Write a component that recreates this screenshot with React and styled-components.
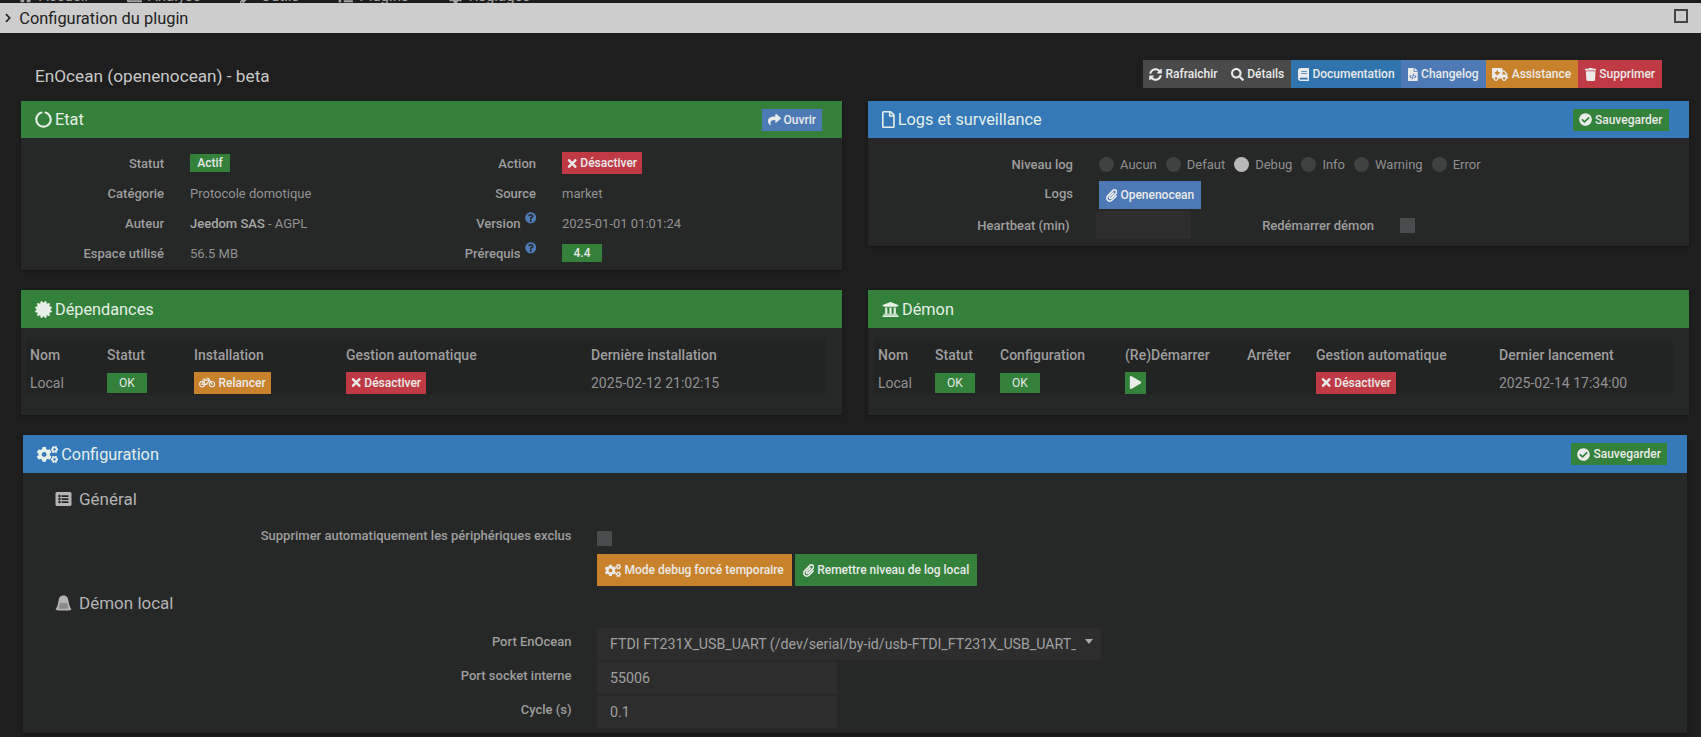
import styled, { createGlobalStyle } from "styled-components";
import {
  FaAmbulance, FaBicycle, FaBook, FaCertificate, FaCheckCircle, FaChevronRight, FaCircleNotch, FaCogs,
  FaFileCode, FaListAlt, FaPaperclip, FaPlay, FaQuestionCircle, FaRegFile, FaSearch, FaShare, FaSyncAlt,
  FaTimes, FaTrash, FaUniversity, FaHome, FaChartBar, FaWrench, FaTasks, FaCog,
} from "react-icons/fa";

const GlobalStyle = createGlobalStyle`
  html, body { margin: 0; padding: 0; background: #1e1e1e; }
  body { font-family: Roboto, "Liberation Sans", sans-serif; font-size: 13px; color: #9c9c9c; overflow: hidden; }
  * { box-sizing: border-box; }
`;

const colors = {
  green: "#33813b",
  blue: "#3579b8",
  orange: "#c8822c",
  red: "#c03a46",
  steel: "#4d7ab5",
  gray: "#4a4a4a",
  doc: "#3174ad",
};

// react-icons gives every icon a 1em square, these are not square
const sized = (Icon, ratio) => styled(Icon)`
  && { width: ${ratio}em; height: 1em; flex: none; }
`;

const CogsIcon = sized(FaCogs, 1.25);
const AmbulanceIcon = sized(FaAmbulance, 1.25);
const BicycleIcon = sized(FaBicycle, 1.25);
const FileIcon = sized(FaRegFile, 0.75);
const FileCodeIcon = sized(FaFileCode, 0.75);
const BookIcon = sized(FaBook, 0.875);
const TrashIcon = sized(FaTrash, 0.875);
const ClipIcon = sized(FaPaperclip, 0.875);
const TimesIcon = sized(FaTimes, 0.8);
const ChevronIcon = sized(FaChevronRight, 0.625);

const Page = styled.div`
  width: 1701px;
  height: 737px;
  overflow: hidden;
`;

const NavStrip = styled.div`
  height: 3px;
  overflow: hidden;
  display: flex;
  justify-content: space-between;
  background: #1c1c1c;
  padding: 0 33px 0 18px;
`;

const NavItems = styled.div`
  display: flex;
  gap: 39px;
  margin-top: -11px;
  font-size: 15px;
  line-height: 18px;
  color: #a5a5a5;
  span { display: flex; align-items: center; gap: 6px; }
`;

const NavChips = styled.div`
  display: flex;
  gap: 9px;
  height: 3px;
  padding-left: 1350px;
  i { display: block; width: 9px; height: 2px; margin-top: 1px; }
`;

const TitleBar = styled.div`
  height: 30px;
  background: #cdcdcd;
  color: #222;
  display: flex;
  align-items: center;
  justify-content: space-between;
  padding: 0 13px 0 5px;
  font-size: 16.4px;
  svg { font-size: 10px; margin-right: 8px; }
`;

const TitleGroup = styled.div`
  display: flex;
  align-items: center;
`;

const WindowBox = styled.div`
  width: 14px;
  height: 14px;
  border: 2px solid #444;
  margin-top: -5px;
`;

const PluginHead = styled.div`
  height: 68px;
  display: flex;
  align-items: flex-end;
  justify-content: space-between;
  padding: 0 39px 13px 35px;
`;

const PluginName = styled.div`
  font-size: 17.2px;
  line-height: 20px;
  color: #c8c8c8;
  margin-bottom: 2px;
`;

const Toolbar = styled.div`
  display: flex;
`;

const Btn = styled.span`
  display: inline-flex;
  align-items: center;
  justify-content: center;
  gap: 3px;
  height: ${(p) => p.$h || 22}px;
  padding: 0 ${(p) => p.$pad ?? 6}px;
  background: ${(p) => colors[p.$color]};
  color: #eaeaea;
  font-size: 12px;
  font-weight: 500;
  white-space: nowrap;
  svg { font-size: 13px; flex: none; }
`;

const Columns = styled.div`
  display: grid;
  grid-template-columns: 821px 820.5px;
  column-gap: 26px;
  row-gap: 20px;
  padding-left: 21px;
  align-items: start;
`;

const Panel = styled.section`
  background: #262727;
  box-shadow: 0 1px 3px rgba(0, 0, 0, 0.35);
`;

const PanelHead = styled.header`
  height: ${(p) => p.$h || 38}px;
  background: ${(p) => colors[p.$color]};
  color: #e6efe8;
  display: flex;
  align-items: center;
  justify-content: space-between;
  padding: 0 20px 0 14px;
`;

const PanelTitle = styled.h3`
  margin: 0;
  display: flex;
  align-items: center;
  gap: 3px;
  font-size: 16.3px;
  font-weight: 400;
  svg { font-size: 17px; }
`;

const InfoGrid = styled.div`
  display: grid;
  grid-template-columns: 143px 200px 120px 1fr;
  grid-auto-rows: 30px;
  column-gap: 26px;
  align-items: center;
  padding: 10px 0 2px;
`;

const Label = styled.div`
  display: flex;
  justify-content: flex-end;
  align-items: center;
  font-weight: 500;
  color: #9e9e9e;
  white-space: nowrap;
`;

const Value = styled.div`
  color: #929292;
  b { color: #a8a8a8; font-weight: 500; }
`;

const Help = styled(FaQuestionCircle)`
  color: #4d7ab5;
  font-size: 11.5px;
  margin: -10px 0 0 4px;
`;

const Badge = styled.span`
  display: inline-flex;
  align-items: center;
  justify-content: center;
  width: 40px;
  height: ${(p) => p.$h || 18}px;
  background: ${colors.green};
  color: #e8e8e8;
  font-size: 12px;
  font-weight: ${(p) => p.$weight || 500};
`;

const LogsBody = styled.div`
  padding: 11px 0 7px;
  display: flex;
  flex-direction: column;
  gap: 2px;
`;

const FormRow = styled.div`
  display: flex;
  align-items: center;
  height: ${(p) => p.$h || 28}px;
`;

const RowLabel = styled(Label)`
  width: ${(p) => p.$w}px;
  flex: none;
  margin-right: ${(p) => p.$gap ?? 26}px;
  margin-top: ${(p) => p.$up || 0}px;
`;

const Radios = styled.div`
  display: flex;
  gap: 9px;
`;

const RadioItem = styled.label`
  display: flex;
  align-items: center;
  gap: 6px;
  color: #8f8f8f;
`;

const RadioDot = styled.span`
  width: 15px;
  height: 15px;
  border-radius: 50%;
  background: ${(p) => (p.$on ? "#b8b8b8" : "#404141")};
`;

const Checkbox = styled.span`
  display: block;
  width: 15px;
  height: 15px;
  background: #4a4b4d;
`;

const Field = styled.div`
  width: ${(p) => p.$w}px;
  height: 28px;
  background: #2d2d2d;
`;

const TableBody = styled.div`
  padding: 11px 16px 20px ${(p) => p.$left || 5}px;
`;

const Table = styled.table`
  width: 100%;
  table-layout: fixed;
  border-collapse: collapse;
  background: #222323;
  font-size: 14px;
  th, td { padding: 0 0 0 4px; text-align: left; vertical-align: middle; }
  th { height: 31px; font-weight: 500; color: #9e9e9e; }
  td { height: 25px; color: #929292; }
`;

const ConfigPanel = styled(Panel)`
  margin: 20px 14px 0 23px;
  height: 298px;
`;

const ConfigBody = styled.div`
  padding-top: 14px;
`;

const SubTitle = styled.h4`
  margin: ${(p) => p.$mt || 0}px 0 0 32px;
  height: 24px;
  display: flex;
  align-items: center;
  gap: 7px;
  font-size: 17px;
  font-weight: 400;
  color: #b4b4b4;
  svg { width: 17px; font-size: 16px; flex: none; }
`;

const ConfRow = styled.div`
  display: flex;
  align-items: center;
  height: ${(p) => p.$h || 32}px;
  margin-top: ${(p) => p.$mt || 0}px;
`;

const ConfLabel = styled(Label)`
  width: 548.5px;
  flex: none;
  margin-right: 25.5px;
  margin-top: -5px;
`;

const Spacer = styled.div`
  width: 574px;
  flex: none;
`;

const BigButtons = styled.div`
  display: flex;
  gap: 3px;
`;

const Input = styled.div`
  width: ${(p) => p.$w || 240}px;
  height: 32px;
  background: #2d2d2d;
  color: #a0a0a0;
  font-size: 14.2px;
  display: flex;
  align-items: center;
  justify-content: space-between;
  padding: 0 8px 0 13px;
  overflow: hidden;
  white-space: nowrap;
`;

const SelectText = styled.span`
  width: 466px;
  overflow: hidden;
`;

const Caret = styled.span`
  width: 0;
  height: 0;
  border-left: 4px solid transparent;
  border-right: 4px solid transparent;
  border-top: 5px solid #aaa;
  margin-top: -5px;
`;

// no matching helmet in the icon packs
const HelmetIcon = () => (
  <svg viewBox="0 0 18 16" fill="currentColor" height="16">
    <path d="M9 0C5.6 0 4.2 2.4 3.8 5.4L2.6 11 0.6 15.2C3 15.9 6 16 9 16s6-.1 8.4-.8L15.4 11l-1.2-5.6C13.8 2.4 12.4 0 9 0z" />
    <path d="M5 8h8l1 6H4z" fill="#8b8b8b" />
  </svg>
);

const Deactivate = () => (
  <Btn $color="red" $pad={0} style={{ width: 80 }}><TimesIcon />Désactiver</Btn>
);

const radios = ["Aucun", "Defaut", "Debug", "Info", "Warning", "Error"];

export default function App() {
  return (
    <Page>
      <GlobalStyle />
      <NavStrip>
        <NavItems>
          <span><FaHome />Accueil</span>
          <span><FaChartBar />Analyse</span>
          <span><FaWrench />Outils</span>
          <span><FaTasks />Plugins</span>
          <span><FaCog />Réglages</span>
        </NavItems>
        <NavChips>
          <i style={{ background: "#8a8a8a" }} />
          <i style={{ background: "#c8822c" }} />
          <i style={{ background: "#8a8a8a" }} />
          <i style={{ background: "#6f9a3c" }} />
          <i style={{ background: "#4d7ab5" }} />
          <i style={{ background: "#c8822c", width: 20, height: 3, marginTop: 0, marginLeft: 120 }} />
        </NavChips>
      </NavStrip>
      <TitleBar>
        <TitleGroup><ChevronIcon />Configuration du plugin</TitleGroup>
        <WindowBox />
      </TitleBar>

      <PluginHead>
        <PluginName>EnOcean (openenocean) - beta</PluginName>
        <Toolbar>
          <Btn $color="gray" $h={28} $pad={6.9}><FaSyncAlt />Rafraichir</Btn>
          <Btn $color="gray" $h={28} $pad={6.9}><FaSearch />Détails</Btn>
          <Btn $color="doc" $h={28} $pad={6.9}><BookIcon />Documentation</Btn>
          <Btn $color="steel" $h={28} $pad={6.9}><FileCodeIcon />Changelog</Btn>
          <Btn $color="orange" $h={28} $pad={6.9}><AmbulanceIcon />Assistance</Btn>
          <Btn $color="red" $h={28} $pad={6.9}><TrashIcon />Supprimer</Btn>
        </Toolbar>
      </PluginHead>

      <Columns>
        <Panel>
          <PanelHead $color="green" $h={37}>
            <PanelTitle><FaCircleNotch />Etat</PanelTitle>
            <Btn $color="steel"><FaShare />Ouvrir</Btn>
          </PanelHead>
          <InfoGrid>
            <Label>Statut</Label>
            <Value><Badge>Actif</Badge></Value>
            <Label>Action</Label>
            <Value><Deactivate /></Value>
            <Label>Catégorie</Label>
            <Value>Protocole domotique</Value>
            <Label>Source</Label>
            <Value>market</Value>
            <Label>Auteur</Label>
            <Value><b>Jeedom SAS</b> - AGPL</Value>
            <Label>Version<Help /></Label>
            <Value>2025-01-01 01:01:24</Value>
            <Label>Espace utilisé</Label>
            <Value>56.5 MB</Value>
            <Label>Prérequis<Help /></Label>
            <Value><Badge>4.4</Badge></Value>
          </InfoGrid>
        </Panel>

        <Panel>
          <PanelHead $color="blue" $h={37}>
            <PanelTitle><FileIcon />Logs et surveillance</PanelTitle>
            <Btn $color="green"><FaCheckCircle />Sauvegarder</Btn>
          </PanelHead>
          <LogsBody>
            <FormRow $h={30}>
              <RowLabel $w={205}>Niveau log</RowLabel>
              <Radios>
                {radios.map((r) => (
                  <RadioItem key={r}><RadioDot $on={r === "Debug"} />{r}</RadioItem>
                ))}
              </Radios>
            </FormRow>
            <FormRow>
              <RowLabel $w={205} $up={-4}>Logs</RowLabel>
              <Btn $color="steel" $h={28} $pad={7}><ClipIcon />Openenocean</Btn>
            </FormRow>
            <FormRow>
              <RowLabel $w={201.5} $gap={26.5}>Heartbeat (min)</RowLabel>
              <Field $w={95} />
              <RowLabel $w={183}>Redémarrer démon</RowLabel>
              <Checkbox />
            </FormRow>
          </LogsBody>
        </Panel>

        <Panel>
          <PanelHead $color="green">
            <PanelTitle><FaCertificate />Dépendances</PanelTitle>
          </PanelHead>
          <TableBody>
            <Table>
              <colgroup>
                <col style={{ width: 77 }} /><col style={{ width: 87 }} /><col style={{ width: 152 }} /><col style={{ width: 245 }} /><col />
              </colgroup>
              <thead>
                <tr><th>Nom</th><th>Statut</th><th>Installation</th><th>Gestion automatique</th><th>Dernière installation</th></tr>
              </thead>
              <tbody>
                <tr>
                  <td>Local</td>
                  <td><Badge $h={20} $weight={400}>OK</Badge></td>
                  <td><Btn $color="orange" $pad={0} style={{ width: 77 }}><BicycleIcon />Relancer</Btn></td>
                  <td><Deactivate /></td>
                  <td>2025-02-12 21:02:15</td>
                </tr>
              </tbody>
            </Table>
          </TableBody>
        </Panel>

        <Panel>
          <PanelHead $color="green">
            <PanelTitle><FaUniversity />Démon</PanelTitle>
          </PanelHead>
          <TableBody $left={6}>
            <Table>
              <colgroup>
                <col style={{ width: 57 }} /><col style={{ width: 65 }} /><col style={{ width: 125 }} /><col style={{ width: 122 }} /><col style={{ width: 69 }} /><col style={{ width: 183 }} /><col />
              </colgroup>
              <thead>
                <tr><th>Nom</th><th>Statut</th><th>Configuration</th><th>(Re)Démarrer</th><th>Arrêter</th><th>Gestion automatique</th><th>Dernier lancement</th></tr>
              </thead>
              <tbody>
                <tr>
                  <td>Local</td>
                  <td><Badge $h={20} $weight={400}>OK</Badge></td>
                  <td><Badge $h={20} $weight={400}>OK</Badge></td>
                  <td><Btn $color="green" $pad={0} style={{ width: 21 }}><FaPlay /></Btn></td>
                  <td />
                  <td><Deactivate /></td>
                  <td>2025-02-14 17:34:00</td>
                </tr>
              </tbody>
            </Table>
          </TableBody>
        </Panel>
      </Columns>

      <ConfigPanel>
        <PanelHead $color="blue">
          <PanelTitle><CogsIcon />Configuration</PanelTitle>
          <Btn $color="green"><FaCheckCircle />Sauvegarder</Btn>
        </PanelHead>
        <ConfigBody>
          <SubTitle><FaListAlt />Général</SubTitle>
          <ConfRow $h={30} $mt={12}>
            <ConfLabel>Supprimer automatiquement les périphériques exclus</ConfLabel>
            <Checkbox />
          </ConfRow>
          <ConfRow $mt={1}>
            <Spacer />
            <BigButtons>
              <Btn $color="orange" $h={32} $pad={0} style={{ width: 195 }}><CogsIcon />Mode debug forcé temporaire</Btn>
              <Btn $color="green" $h={32} $pad={0} style={{ width: 182 }}><ClipIcon />Remettre niveau de log local</Btn>
            </BigButtons>
          </ConfRow>
          <SubTitle $mt={5}><HelmetIcon />Démon local</SubTitle>
          <ConfRow $mt={13}>
            <ConfLabel>Port EnOcean</ConfLabel>
            <Input $w={504}>
              <SelectText>FTDI FT231X_USB_UART (/dev/serial/by-id/usb-FTDI_FT231X_USB_UART_DK0DLXXX-if00-port0)</SelectText>
              <Caret />
            </Input>
          </ConfRow>
          <ConfRow $mt={2}>
            <ConfLabel>Port socket interne</ConfLabel>
            <Input>55006</Input>
          </ConfRow>
          <ConfRow $mt={2}>
            <ConfLabel>Cycle (s)</ConfLabel>
            <Input>0.1</Input>
          </ConfRow>
        </ConfigBody>
      </ConfigPanel>
    </Page>
  );
}
